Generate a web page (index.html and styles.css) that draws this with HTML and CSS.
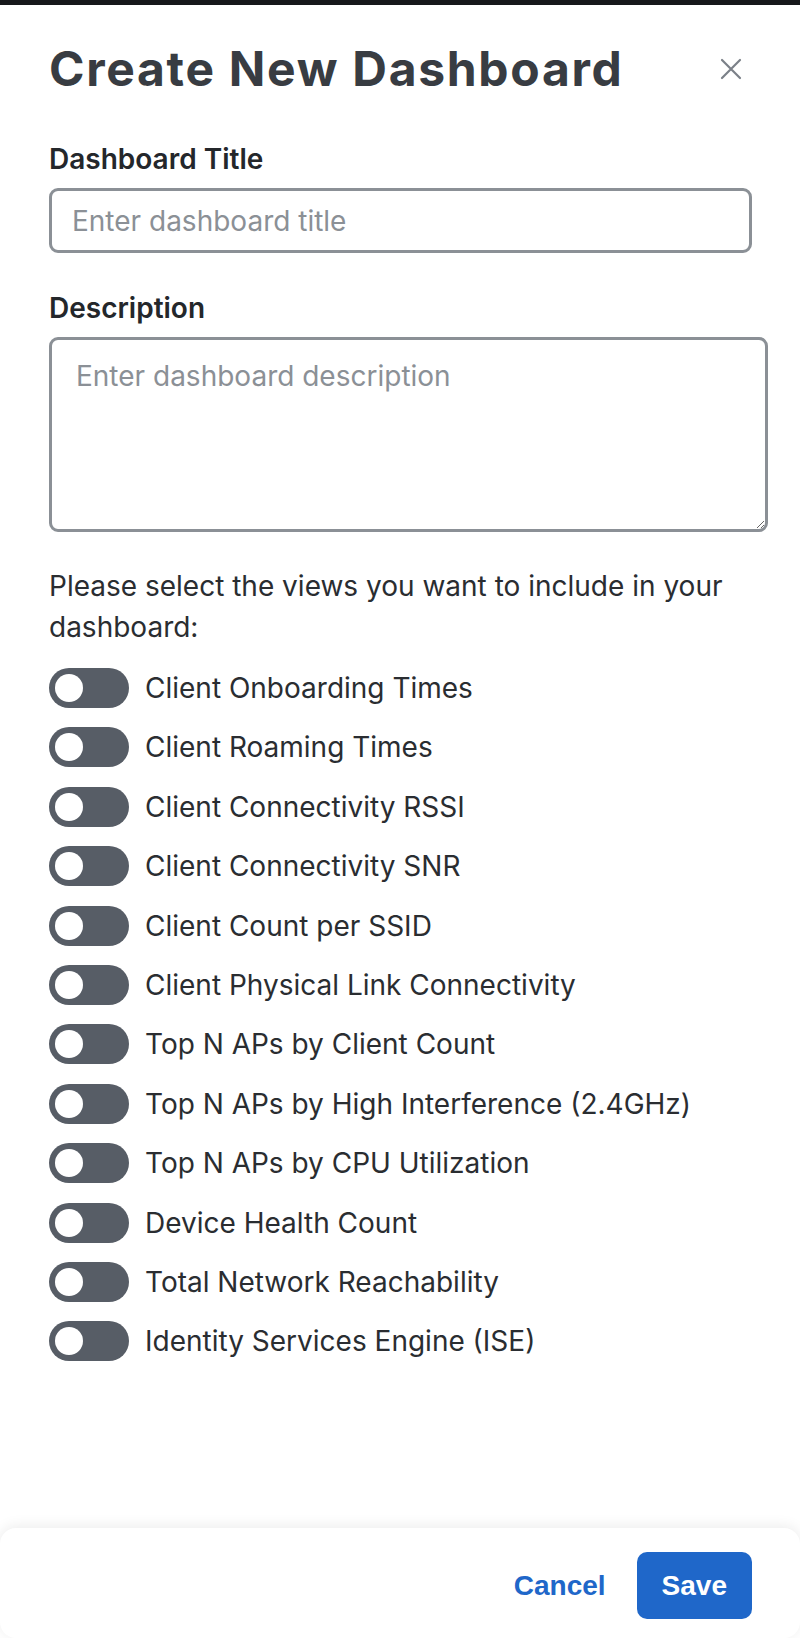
FILE: index.html
```html
<!DOCTYPE html>
<html>

<head>
  <meta charset="UTF-8">
  <title>Create New Dashboard</title>
  <link rel="stylesheet" href="styles.css">
</head>

<body>
  <div class="topbar"></div>
  <div class="modal">
    <div class="modal-header">
      <h1>Create New Dashboard</h1>
      <button class="close" aria-label="Close">
        <svg width="24" height="24" viewBox="0 0 24 24">
          <path d="M3 3 L21 21 M21 3 L3 21" stroke="#7b8088" stroke-width="2.2" stroke-linecap="round" fill="none" />
        </svg>
      </button>
    </div>

    <label class="field-label" for="title">Dashboard Title</label>
    <input class="field-input" id="title" type="text" placeholder="Enter dashboard title">

    <label class="field-label" for="desc">Description</label>
    <textarea class="field-area" id="desc" placeholder="Enter dashboard description"></textarea>

    <p class="intro">Please select the views you want to include in your dashboard:</p>

    <ul class="views">
      <li><span class="toggle"></span>Client Onboarding Times</li>
      <li><span class="toggle"></span>Client Roaming Times</li>
      <li><span class="toggle"></span>Client Connectivity RSSI</li>
      <li><span class="toggle"></span>Client Connectivity SNR</li>
      <li><span class="toggle"></span>Client Count per SSID</li>
      <li><span class="toggle"></span>Client Physical Link Connectivity</li>
      <li><span class="toggle"></span>Top N APs by Client Count</li>
      <li><span class="toggle"></span>Top N APs by High Interference (2.4GHz)</li>
      <li><span class="toggle"></span>Top N APs by CPU Utilization</li>
      <li><span class="toggle"></span>Device Health Count</li>
      <li><span class="toggle"></span>Total Network Reachability</li>
      <li><span class="toggle"></span>Identity Services Engine (ISE)</li>
    </ul>
  </div>

  <footer class="modal-footer">
    <button class="btn btn-cancel">Cancel</button>
    <button class="btn btn-save">Save</button>
  </footer>
</body>

</html>
```

FILE: styles.css
```css
/* page */
body {
  margin: 0;
  background: #fff;
  font-family: Inter, "Noto Sans", sans-serif;
  color: #2a2d31;
}

.topbar {
  height: 5px;
  background-color: #16181b;
}

/* modal body */
.modal {
  padding: 35px 32px 0 49px;
}

.modal-header {
  display: flex;
  align-items: center;
  justify-content: space-between;
  height: 58px;
  margin-bottom: 44px;
}

.modal-header h1 {
  margin: 0;
  font-size: 48px;
  line-height: 58px;
  font-weight: 700;
  color: #383c42;
  letter-spacing: 1.7px;
}

.close {
  border: 0;
  background: none;
  padding: 0;
  margin-right: 25px;
  width: 24px;
  height: 24px;
}

/* form fields */
.field-label {
  display: block;
  font-size: 28px;
  line-height: 34px;
  font-weight: 600;
  color: #24272b;
  margin-bottom: 12px;
}

.field-input,
.field-area {
  display: block;
  box-sizing: border-box;
  border: 3px solid #8b9096;
  border-radius: 9px;
  font-family: Inter, "Noto Sans", sans-serif;
  font-size: 28px;
  color: #2a2d31;
  outline: none;
}

.field-input::placeholder,
.field-area::placeholder {
  color: #8b9096;
}

.field-input {
  width: 703px;
  height: 65px;
  padding: 0 20px;
  margin-bottom: 38px;
}

.field-area {
  width: 719px;
  height: 195px;
  padding: 19px 24px;
  line-height: 34px;
  resize: vertical;
}

.intro {
  margin: 34px 0 20px;
  font-size: 28px;
  line-height: 41px;
  color: #2a2d31;
}

/* view toggles */
.views {
  list-style: none;
  margin: 0;
  padding: 0;
  display: flex;
  flex-direction: column;
  gap: 19.4px;
}

.views li {
  display: flex;
  align-items: center;
  gap: 16px;
  height: 40px;
  font-size: 28px;
  color: #2a2d31;
}

.toggle {
  position: relative;
  flex: none;
  width: 80px;
  height: 40px;
  border-radius: 20px;
  background-color: #575d66;
}

.toggle::after {
  content: "";
  position: absolute;
  left: 6px;
  top: 6px;
  width: 28px;
  height: 28px;
  border-radius: 50%;
  background: #fff;
}

/* footer */
.modal-footer {
  margin-top: 167px;
  height: 110px;
  box-sizing: border-box;
  padding: 24px 48px 0 0;
  display: flex;
  justify-content: flex-end;
  align-items: flex-start;
  gap: 6px;
  border-radius: 16px;
  box-shadow: 0 -2px 14px rgba(0, 0, 0, 0.08);
}

.btn {
  height: 67px;
  border: 0;
  border-radius: 10px;
  padding: 0 25px;
  font-family: "Liberation Sans", Arial, sans-serif;
  font-size: 28px;
  font-weight: 700;
}

.btn-cancel {
  background: none;
  color: #1f67c9;
}

.btn-save {
  background-color: #1f67c9;
  color: #fff;
}
```
